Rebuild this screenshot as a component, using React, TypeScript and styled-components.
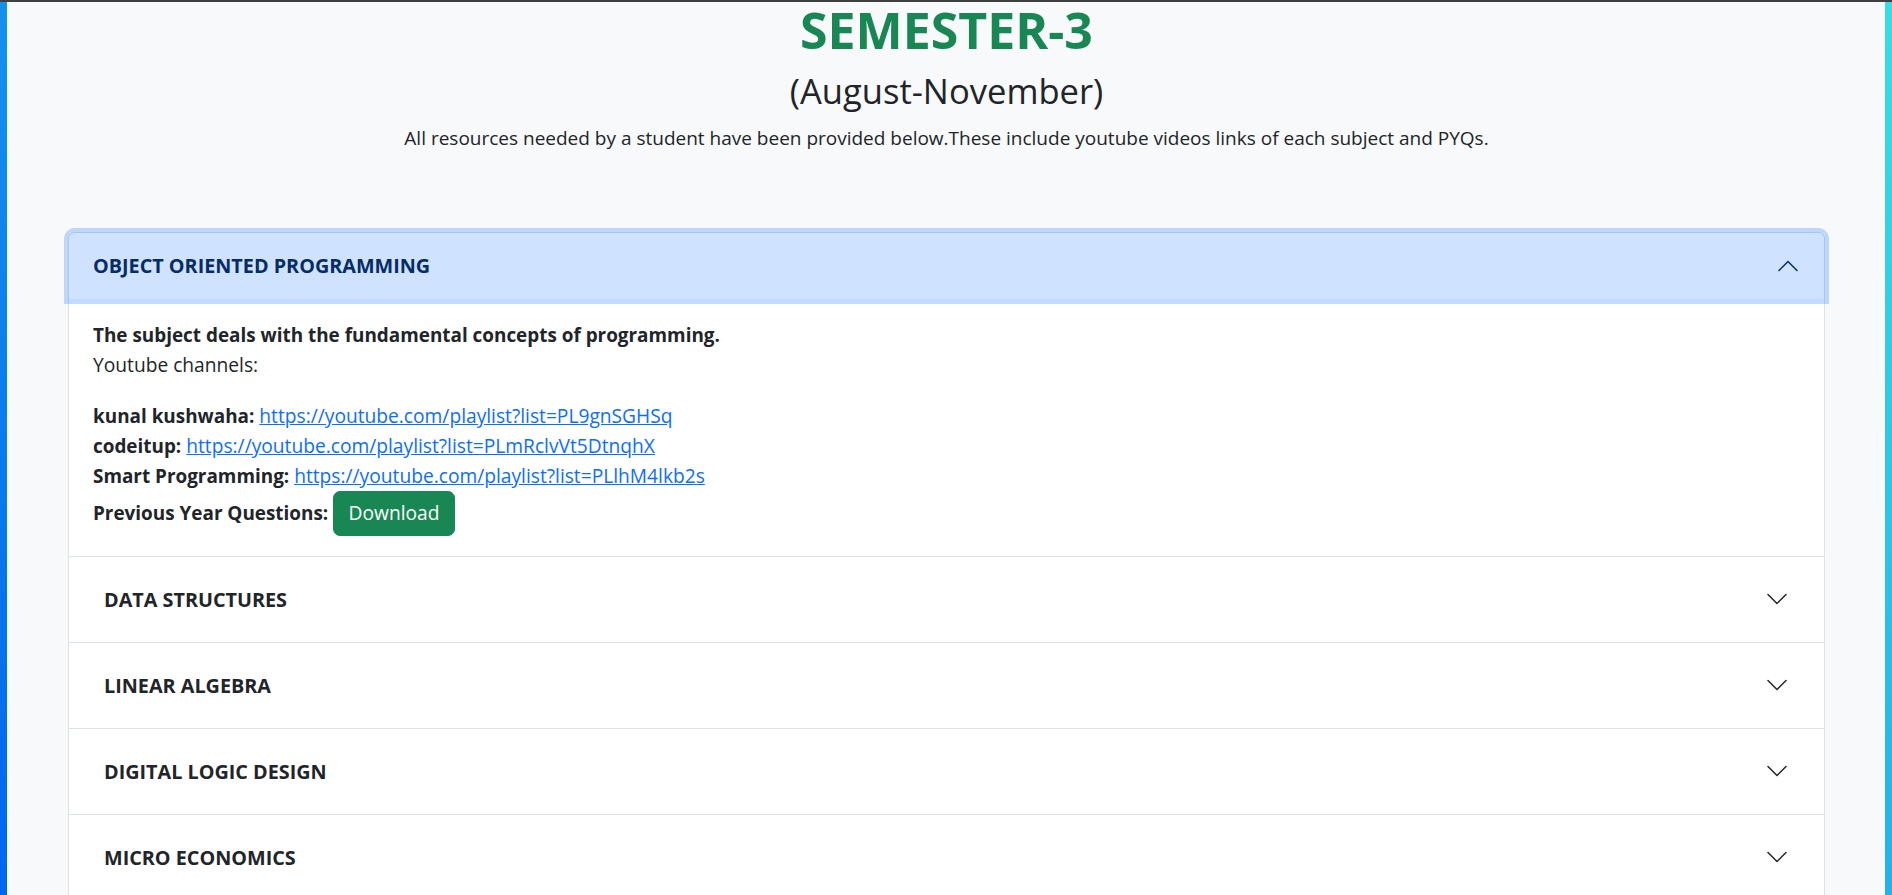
import React from "react";
import styled, { createGlobalStyle } from "styled-components";

const GlobalStyle = createGlobalStyle`
  html, body { margin: 0; padding: 0; }
  * { box-sizing: border-box; }
  body {
    font-family: "Open Sans", "Noto Sans", "Liberation Sans", sans-serif;
    color: #212529;
    background: linear-gradient(40deg, rgb(0, 102, 240) 0%, rgb(56, 221, 228) 100%) fixed;
  }
`;

const Frame = styled.div`
  min-height: 100vh;
  border-top: 2px solid #3f3f3f;
  padding: 0 7px;
  display: flex;
`;

const Page = styled.main`
  flex: 1;
  background: #f8f9fa;
  padding: 0 60px 60px 61px;
  display: flex;
  flex-direction: column;
`;

const Hero = styled.header`
  display: flex;
  flex-direction: column;
  align-items: center;
  text-align: center;
`;

const Title = styled.h1`
  margin: 0;
  font-size: 50px;
  line-height: 56px;
  font-weight: 700;
  color: #198754;
`;

const Subtitle = styled.h2`
  margin: 13px 0 0;
  font-size: 34.6px;
  line-height: 40px;
  font-weight: 500;
  color: #212529;
`;

const Lead = styled.p`
  margin: 12.5px 0 0;
  font-size: 19px;
  line-height: 28px;
  color: #212529;
`;

const Accordion = styled.section`
  margin-top: 80px;
  display: flex;
  flex-direction: column;
  background: #fff;
`;

const Item = styled.div<{ $first: boolean }>`
  border: 1px solid #dee2e6;
  border-top-width: ${(p) => (p.$first ? "1px" : "0")};
  border-radius: ${(p) => (p.$first ? "7px 7px 0 0" : "0")};
  background: #fff;
`;

const HeaderButton = styled.button<{ $open: boolean; $first: boolean }>`
  position: relative;
  z-index: ${(p) => (p.$open ? 3 : "auto")};
  display: flex;
  align-items: center;
  width: 100%;
  margin: 0;
  border: 0;
  font-family: inherit;
  font-size: 19.8px;
  font-weight: 700;
  line-height: 29px;
  text-align: left;
  cursor: pointer;
  padding: ${(p) => (p.$open ? "18.5px 24px" : "28px 35px")};
  background: ${(p) => (p.$open ? "#cfe2ff" : "#fff")};
  color: ${(p) => (p.$open ? "#052c65" : "#212529")};
  border-radius: ${(p) => (p.$first ? "6px 6px 0 0" : "0")};
  box-shadow: ${(p) => (p.$open ? "0 0 0 5px rgba(13, 110, 253, 0.25)" : "none")};
`;

const HeaderLabel = styled.span`
  flex: 1;
`;

const Chevron = styled.svg<{ $open: boolean }>`
  flex-shrink: 0;
  width: 24px;
  height: 24px;
  transform: ${(p) => (p.$open ? "rotate(-180deg)" : "none")};
`;

const Body = styled.div`
  padding: 21px 24px 20px;
  font-size: 19.2px;
  line-height: 30px;
  background: #fff;
`;

const Lede = styled.p`
  margin: 0 0 21px;
`;

const Line = styled.div``;

const Label = styled.strong`
  font-weight: 700;
  font-size: 18.9px;
`;

const Link = styled.a`
  color: #0d6efd;
  text-decoration: underline;
`;

const DownloadButton = styled.button`
  display: inline-block;
  vertical-align: baseline;
  font-family: inherit;
  font-size: 19.2px;
  line-height: 28.8px;
  padding: 7.2px 14.4px;
  color: #fff;
  background: #198754;
  border: 1px solid #198754;
  border-radius: 7px;
  cursor: pointer;
`;

type Subject = { name: string };

const subjects: Subject[] = [
  { name: "OBJECT ORIENTED PROGRAMMING" },
  { name: "DATA STRUCTURES" },
  { name: "LINEAR ALGEBRA" },
  { name: "DIGITAL LOGIC DESIGN" },
  { name: "MICRO ECONOMICS" },
];

const channels = [
  { who: "kunal kushwaha:", url: "https://youtube.com/playlist?list=PL9gnSGHSq" },
  { who: "codeitup:", url: "https://youtube.com/playlist?list=PLmRclvVt5DtnqhX" },
  { who: "Smart Programming:", url: "https://youtube.com/playlist?list=PLlhM4lkb2s" },
];

function ChevronIcon({ open }: { open: boolean }) {
  return (
    <Chevron $open={open} viewBox="0 0 16 16" fill="none" stroke={open ? "#052c65" : "#212529"} strokeLinecap="round" strokeLinejoin="round">
      <path d="M2 5L8 11L14 5" />
    </Chevron>
  );
}

export default function App() {
  return (
    <>
      <GlobalStyle />
      <Frame>
        <Page>
          <Hero>
            <Title>SEMESTER-3</Title>
            <Subtitle>(August-November)</Subtitle>
            <Lead>
              All resources needed by a student have been provided below.These include youtube videos links of each subject and PYQs.
            </Lead>
          </Hero>
          <Accordion>
            {subjects.map((s, i) => {
              const open = i === 0;
              return (
                <Item key={s.name} $first={i === 0}>
                  <HeaderButton $open={open} $first={i === 0}>
                    <HeaderLabel>{s.name}</HeaderLabel>
                    <ChevronIcon open={open} />
                  </HeaderButton>
                  {open && (
                    <Body>
                      <Label>The subject deals with the fundamental concepts of programming.</Label>
                      <Lede>Youtube channels:</Lede>
                      {channels.map((c) => (
                        <Line key={c.who}>
                          <Label>{c.who}</Label> <Link href="#">{c.url}</Link>
                        </Line>
                      ))}
                      <Line>
                        <Label>Previous Year Questions:</Label> <DownloadButton>Download</DownloadButton>
                      </Line>
                    </Body>
                  )}
                </Item>
              );
            })}
          </Accordion>
        </Page>
      </Frame>
    </>
  );
}
